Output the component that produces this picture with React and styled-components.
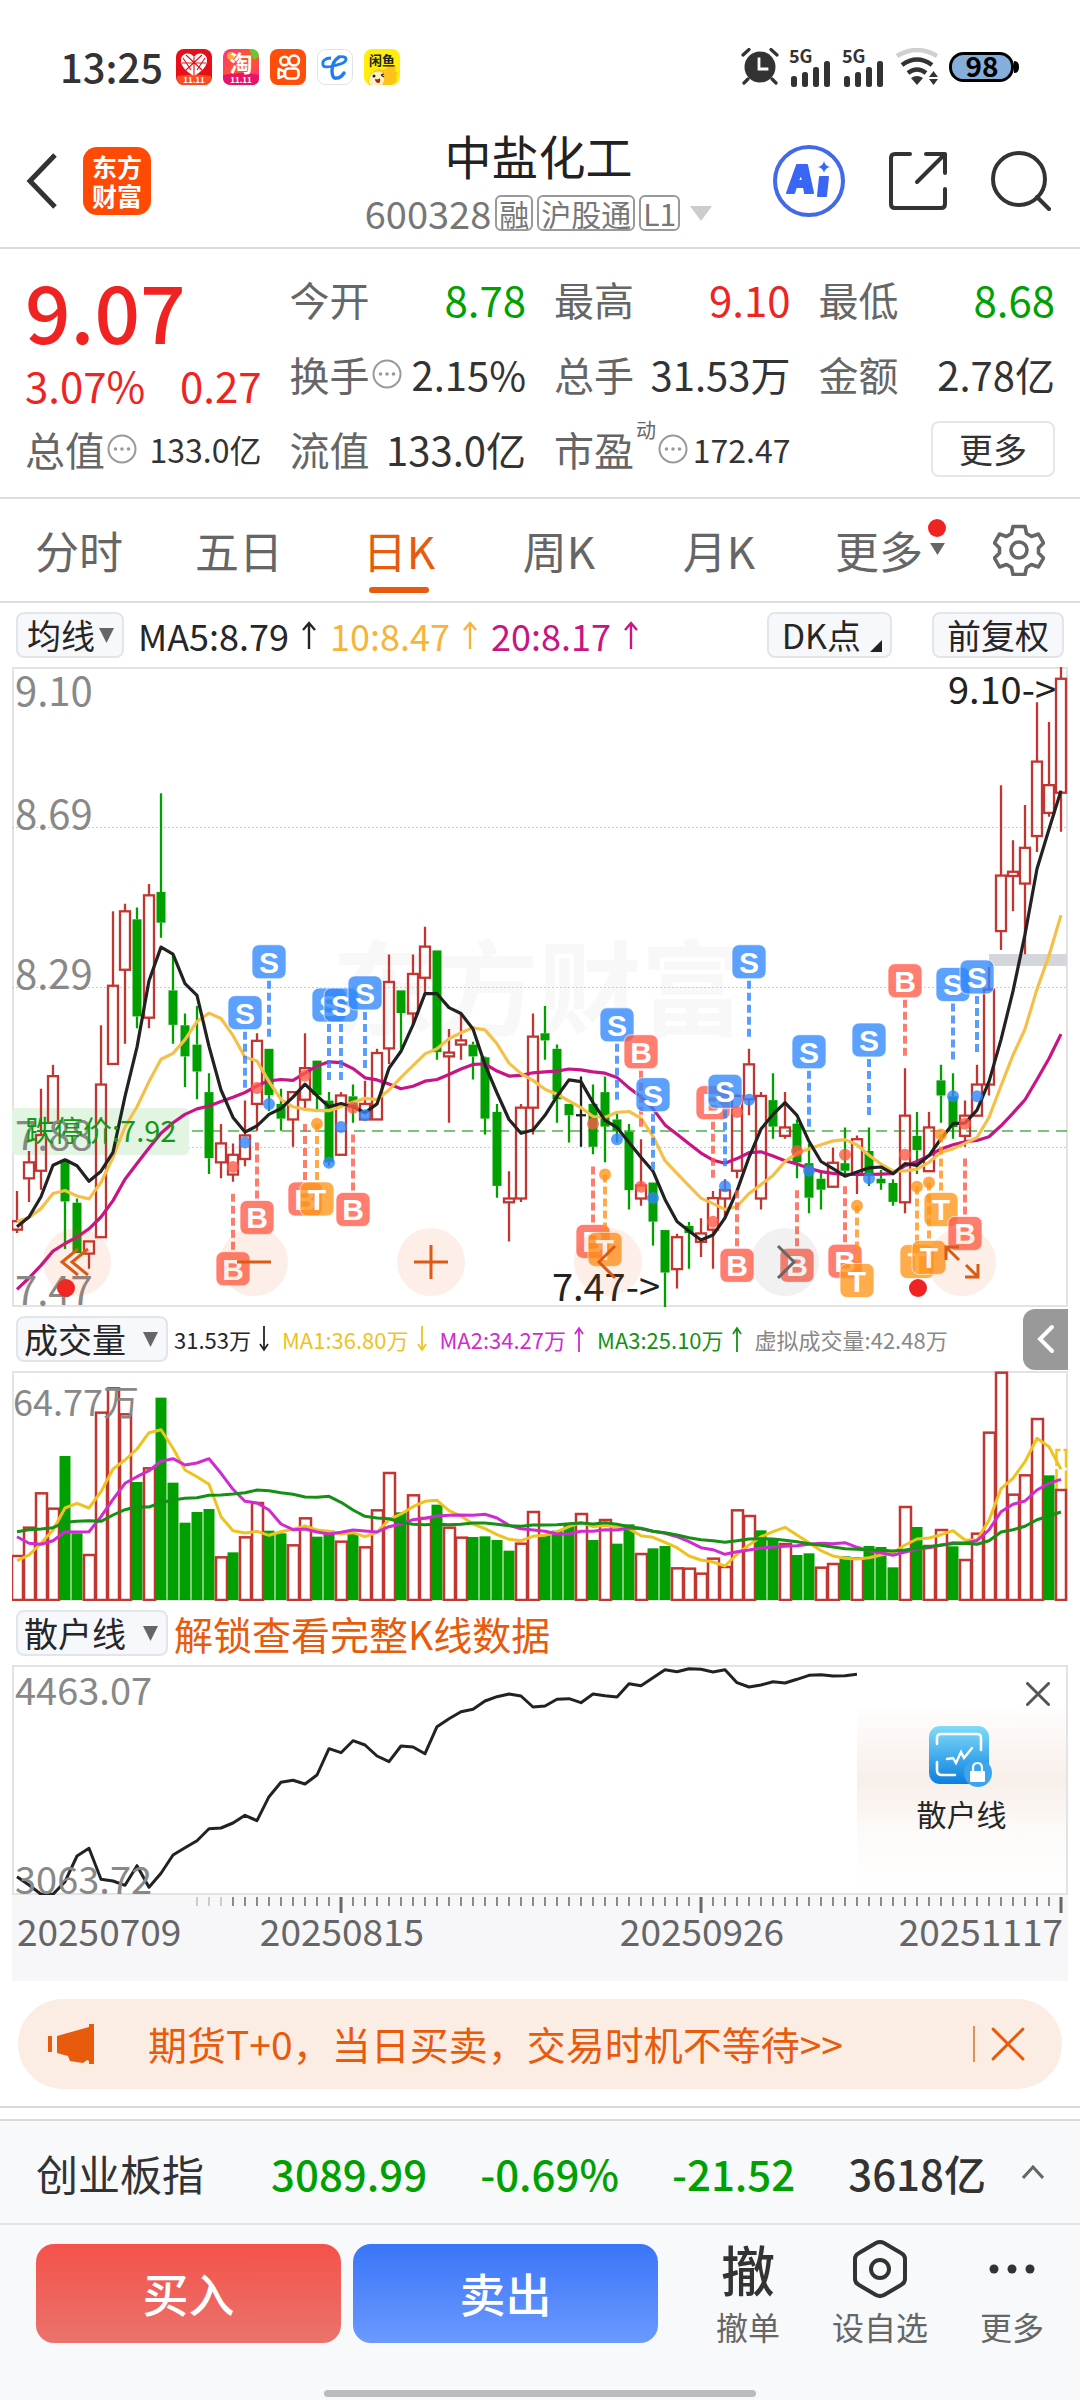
import React from "react";
import styled, { createGlobalStyle } from "styled-components";

const RED = "#f02323";
const CANDLE_RED = "#c23531";
const GREEN = "#00a000";
const ORANGE = "#e85a0c";

const GlobalStyle = createGlobalStyle`
  * { box-sizing: border-box; }
  body {
    margin: 0;
    background: #fff;
    color: #333;
    font-family: "Noto Sans CJK SC", "Noto Sans", sans-serif;
  }
  button, select {
    margin: 0; padding: 0; border: 0; background: none;
    font: inherit; color: inherit; cursor: pointer;
  }
  h1, p { margin: 0; font-weight: 400; }
  svg { display: block; }
  svg text { font-family: "Noto Sans CJK SC", "Noto Sans", sans-serif; }
`;

/* ---------- plot data ---------- */

const STEP = 12;
const px = (i) => 5 + i * STEP;
const priceY = (v) => ((v - 14) * 640) / 1522;
const thirdY = (top) => (v) => (v - top) / 3;

// high, body top, body bottom, low, direction (1 rise, 0 fall, 2 flat)
const CANDLES = [
  [1260, 1332, 1352, 1360, 1], [1165, 1192, 1230, 1286, 1], [1017, 1127, 1212, 1257, 1], [960, 987, 1098, 1098, 1],
  [1186, 1186, 1285, 1398, 0], [1278, 1288, 1408, 1408, 0], [1380, 1380, 1409, 1445, 1], [866, 1007, 1370, 1370, 1],
  [595, 772, 958, 958, 1], [577, 595, 734, 910, 1], [586, 614, 845, 873, 0], [530, 557, 848, 873, 1],
  [314, 549, 622, 658, 0], [700, 783, 865, 910, 0], [838, 866, 940, 1013, 0], [820, 912, 976, 1042, 0],
  [980, 1025, 1182, 1220, 0], [1101, 1147, 1192, 1230, 1], [1147, 1174, 1221, 1238, 1], [1045, 1128, 1184, 1201, 1],
  [885, 903, 1053, 1117, 1], [922, 922, 1032, 1070, 0], [1017, 1053, 1088, 1117, 0], [1025, 1025, 1090, 1155, 1],
  [885, 968, 1043, 1070, 1], [950, 950, 1032, 1072, 0], [1025, 1045, 1192, 1200, 0], [1025, 1033, 1174, 1174, 1],
  [1007, 1035, 1062, 1098, 0], [998, 1053, 1090, 1090, 1], [922, 932, 1090, 1090, 1], [698, 763, 921, 958, 1],
  [783, 783, 837, 922, 0], [698, 744, 838, 866, 1], [632, 679, 753, 790, 1], [688, 688, 930, 948, 0],
  [875, 931, 940, 1098, 1], [838, 902, 912, 948, 1], [905, 912, 940, 995, 0], [940, 942, 1088, 1126, 0],
  [1053, 1072, 1248, 1276, 0], [1213, 1278, 1287, 1380, 1], [1053, 1062, 1278, 1286, 1], [838, 893, 1062, 1126, 1],
  [820, 885, 902, 948, 0], [912, 922, 1042, 1098, 0], [1053, 1053, 1080, 1145, 0], [988, 1080, 1080, 1155, 2],
  [1007, 1053, 1155, 1173, 0], [988, 1025, 1107, 1192, 0], [1072, 1090, 1117, 1145, 0], [1101, 1119, 1258, 1304, 0],
  [1137, 1247, 1278, 1295, 1], [1240, 1240, 1333, 1390, 0], [1353, 1353, 1454, 1538, 0], [1362, 1370, 1446, 1492, 1],
  [1334, 1343, 1360, 1445, 0], [1325, 1361, 1381, 1417, 1], [1260, 1277, 1352, 1445, 1], [1232, 1258, 1278, 1325, 1],
  [1030, 1034, 1212, 1230, 1], [922, 959, 1042, 1080, 1], [1025, 1034, 1278, 1304, 1], [980, 1044, 1107, 1136, 0],
  [1025, 1109, 1129, 1136, 1], [1090, 1100, 1192, 1230, 0], [1147, 1194, 1276, 1313, 0], [1210, 1231, 1257, 1304, 0],
  [1157, 1193, 1250, 1250, 1], [1109, 1194, 1212, 1220, 0], [1128, 1137, 1220, 1267, 1], [1109, 1165, 1220, 1248, 0],
  [1210, 1231, 1242, 1257, 0], [1232, 1241, 1286, 1295, 0], [968, 1081, 1287, 1313, 1], [1072, 1129, 1163, 1220, 0],
  [1072, 1109, 1213, 1213, 1], [960, 997, 1033, 1098, 0], [980, 1035, 1108, 1136, 0], [1045, 1081, 1129, 1155, 1],
  [960, 1007, 1081, 1081, 1], [727, 781, 1007, 1033, 1], [295, 510, 642, 687, 1], [426, 501, 511, 595, 1],
  [342, 444, 529, 697, 1], [98, 239, 416, 454, 1], [145, 295, 361, 370, 1], [14, 42, 313, 406, 1],
];

const MA5 = [1345, 1322, 1274, 1199, 1186, 1200, 1237, 1213, 1168, 1035, 918, 760, 680, 697, 767, 795, 916, 1020, 1085, 1120, 1105, 1078, 1064, 1037, 1006, 1034, 1060, 1052, 1060, 1074, 1053, 968, 928, 865, 791, 791, 824, 838, 875, 960, 1027, 1090, 1123, 1115, 1080, 1035, 996, 1000, 1050, 1092, 1109, 1145, 1180, 1213, 1280, 1333, 1355, 1377, 1365, 1324, 1260, 1180, 1113, 1078, 1050, 1080, 1142, 1190, 1207, 1225, 1215, 1205, 1203, 1219, 1195, 1199, 1176, 1136, 1100, 1099, 1068, 1000, 900, 785, 650, 494, 400, 308];
const MA10 = [1333, 1323, 1302, 1266, 1259, 1272, 1279, 1240, 1180, 1108, 1060, 1000, 947, 933, 900, 857, 837, 850, 890, 942, 951, 1000, 1042, 1060, 1066, 1069, 1069, 1060, 1049, 1040, 1043, 1020, 990, 962, 934, 922, 898, 884, 872, 877, 910, 956, 981, 997, 1018, 1030, 1046, 1062, 1083, 1085, 1073, 1071, 1087, 1130, 1188, 1218, 1248, 1277, 1290, 1304, 1297, 1266, 1245, 1223, 1190, 1170, 1160, 1150, 1141, 1138, 1150, 1175, 1196, 1213, 1212, 1208, 1192, 1168, 1160, 1147, 1133, 1085, 1010, 937, 875, 780, 700, 604];
const MA20 = [1494, 1467, 1437, 1403, 1385, 1370, 1350, 1322, 1283, 1232, 1195, 1158, 1123, 1098, 1078, 1065, 1058, 1047, 1037, 1026, 1010, 998, 995, 997, 980, 963, 953, 955, 969, 991, 996, 1006, 1017, 1011, 999, 995, 983, 970, 959, 958, 975, 987, 985, 979, 977, 975, 970, 972, 977, 980, 990, 1015, 1036, 1065, 1103, 1125, 1148, 1170, 1187, 1194, 1183, 1169, 1167, 1177, 1188, 1196, 1206, 1214, 1218, 1221, 1221, 1221, 1220, 1219, 1200, 1190, 1176, 1160, 1150, 1143, 1140, 1131, 1105, 1075, 1043, 995, 945, 887];

// candle index, kind, badge centre, dot, badge side (1 above, -1 below)
const MARKS = [
  [18, "B", 1445, 1203, -1], [19, "S", 836, 1145, 1], [20, "B", 1323, 1015, -1], [21, "S", 715, 1053, 1],
  [24, "B", 1279, 986, -1], [25, "T", 1279, 1100, -1], [26, "S", 818, 1193, 1], [27, "S", 818, 1108, 1],
  [28, "B", 1304, 1062, -1], [29, "S", 789, 1080, 1], [48, "B", 1380, 1100, -1], [49, "T", 1399, 1221, -1],
  [50, "S", 865, 1137, 1], [52, "B", 929, 1250, 1], [53, "S", 1031, 1277, 1], [58, "B", 1050, 1333, 1],
  [59, "S", 1023, 1249, 1], [60, "B", 1437, 1072, -1], [61, "S", 715, 1043, 1], [65, "B", 1437, 1165, -1],
  [66, "S", 929, 1212, 1], [69, "B", 1427, 1174, -1], [70, "T", 1473, 1295, -1], [71, "S", 901, 1230, 1],
  [74, "B", 760, 1174, 1], [75, "T", 1428, 1250, -1], [76, "T", 1418, 1240, -1], [77, "T", 1304, 1126, -1],
  [78, "S", 769, 1035, 1], [79, "B", 1361, 1100, -1], [80, "S", 751, 1035, 1],
];
const MARK_COLORS = { B: "#ff5a46", S: "#2f86ff", T: "#ff9518" };

const VOLUMES = [765, 680, 577, 623, 468, 700, 762, 335, 262, 340, 546, 502, 293, 548, 668, 636, 627, 769, 757, 709, 606, 692, 700, 733, 652, 710, 692, 722, 700, 739, 628, 516, 637, 583, 651, 614, 680, 710, 711, 709, 720, 752, 728, 633, 706, 692, 670, 639, 720, 657, 731, 673, 759, 745, 738, 802, 803, 818, 773, 798, 628, 645, 691, 716, 729, 765, 760, 800, 789, 769, 772, 738, 741, 802, 618, 681, 735, 687, 739, 777, 698, 395, 215, 581, 523, 354, 526, 567];
const VOLUME_FALLS = new Set([4, 5, 10, 12, 13, 14, 15, 16, 18, 21, 22, 25, 26, 28, 32, 35, 38, 39, 40, 41, 44, 45, 46, 48, 50, 51, 53, 54, 62, 63, 65, 66, 69, 71, 72, 73, 75, 78, 86]);
const VMA1 = [782, 765, 730, 690, 624, 610, 624, 575, 507, 480, 447, 398, 389, 445, 510, 530, 553, 650, 692, 699, 694, 706, 695, 688, 678, 690, 694, 702, 698, 710, 697, 659, 642, 620, 604, 601, 632, 648, 672, 686, 704, 718, 722, 709, 706, 695, 680, 667, 680, 676, 682, 686, 707, 712, 727, 743, 768, 780, 786, 798, 763, 735, 710, 695, 682, 705, 728, 752, 768, 775, 777, 773, 765, 758, 735, 717, 714, 704, 692, 720, 720, 661, 566, 535, 485, 415, 440, 508];
const VMA2 = [710, 730, 733, 722, 695, 696, 695, 650, 598, 550, 530, 512, 484, 476, 495, 489, 476, 520, 568, 604, 609, 630, 672, 689, 687, 696, 702, 697, 690, 693, 696, 680, 672, 659, 655, 648, 646, 645, 646, 643, 654, 676, 686, 690, 694, 702, 702, 694, 694, 689, 690, 684, 686, 694, 700, 710, 725, 743, 749, 763, 755, 750, 744, 741, 739, 737, 733, 730, 731, 728, 742, 752, 758, 766, 756, 747, 743, 736, 728, 729, 722, 690, 635, 613, 603, 570, 550, 538];
const VMA3 = [695, 689, 687, 683, 667, 664, 662, 664, 645, 629, 620, 621, 608, 600, 595, 593, 586, 585, 582, 578, 570, 572, 578, 583, 591, 592, 589, 607, 630, 649, 654, 656, 667, 673, 674, 673, 674, 673, 669, 669, 673, 677, 679, 675, 675, 674, 671, 669, 672, 668, 673, 680, 685, 694, 698, 705, 713, 719, 722, 727, 722, 717, 716, 717, 721, 725, 731, 736, 741, 746, 748, 750, 751, 753, 750, 745, 740, 735, 731, 730, 733, 722, 696, 689, 679, 659, 648, 636];
const RETAIL = [830, 855, 883, 883, 845, 768, 745, 838, 843, 856, 797, 862, 820, 765, 743, 722, 686, 684, 669, 646, 662, 590, 547, 541, 552, 525, 446, 458, 422, 435, 468, 485, 438, 441, 461, 380, 356, 335, 328, 303, 290, 282, 288, 321, 318, 298, 296, 308, 282, 287, 291, 251, 257, 233, 209, 215, 206, 208, 216, 209, 248, 261, 255, 245, 249, 238, 226, 224, 228, 227, 223];

const points = (data, y) => data.map((v, i) => `${px(i)},${y(v).toFixed(1)}`).join(" ");

/* ---------- shared parts ---------- */

const Page = styled.main`
  display: flex;
  flex-direction: column;
  min-height: 100vh;
`;

const IconButton = styled.button`
  display: flex;
  flex: none;
`;

const StatusBar = styled.div`
  display: flex;
  align-items: center;
  justify-content: space-between;
  height: 105px;
  padding: 28px 61px 0 60px;
`;

const StatusGroup = styled.div`
  display: flex;
  align-items: center;
  gap: ${(p) => p.$gap}px;
`;

const Clock = styled.time`
  margin-right: 2px;
  padding-bottom: 2px;
  font-size: 40px;
  line-height: 44px;
  font-weight: 500;
`;

const Header = styled.header`
  display: grid;
  grid-template-columns: 1fr auto 1fr;
  align-items: center;
  height: 144px;
  padding: 0 29px 0 26px;
  border-bottom: 2px solid #dcdcdc;
`;

const HeaderSide = styled.div`
  display: flex;
  align-items: center;
  justify-content: ${(p) => (p.$end ? "flex-end" : "flex-start")};
  gap: ${(p) => (p.$end ? 44 : 25)}px;
  padding-top: 10px;
`;

const AppLogo = styled.button`
  width: 68px;
  height: 68px;
  border-radius: 14px;
  background: #ff4a05;
  color: #fff;
  font-size: 25px;
  line-height: 29px;
  font-weight: 700;
`;

const TitleBlock = styled.div`
  display: flex;
  flex-direction: column;
  align-items: center;
  padding-top: 12px;
`;

const Title = styled.h1`
  font-size: 47px;
  line-height: 62px;
  font-weight: 400;
  color: #222;
`;

const SubTitle = styled.div`
  display: flex;
  align-items: center;
  gap: 4px;
  font-size: 38px;
  line-height: 54px;
  color: #777;
`;

const Tag = styled.span`
  padding: 0 2px;
  border: 2px solid #999;
  border-radius: 6px;
  font-size: 30px;
  line-height: 32px;

  &:last-of-type { margin-right: 6px; }
`;

/* ---------- quote ---------- */

const Quote = styled.section`
  display: grid;
  grid-template-columns: repeat(4, 1fr);
  grid-auto-rows: 75px;
  column-gap: 28px;
  padding: 12px 25px 11px;
  border-bottom: 2px solid #dcdcdc;
`;

const PriceCell = styled.div`
  grid-row: span 2;
  color: ${RED};
`;

const Price = styled.p`
  font-size: 80px;
  line-height: 96px;
  font-weight: 500;
`;

const Change = styled.p`
  display: flex;
  justify-content: space-between;
  font-size: 42px;
  line-height: 56px;
`;

const Cell = styled.div`
  display: flex;
  align-items: center;
  justify-content: space-between;
  white-space: nowrap;
`;

const CellLabel = styled.span`
  display: flex;
  align-items: center;
  gap: 2px;
  font-size: 40px;
  color: #666;
`;

const CellValue = styled.span`
  font-size: ${(p) => (p.$color ? 42 : p.$small ? 32 : 40)}px;
  color: ${(p) => p.$color || "#333"};
`;

const Sup = styled.sup`
  align-self: flex-start;
  font-size: 20px;
  line-height: 20px;
`;

const MoreCell = styled(Cell)`
  justify-content: flex-end;
`;

const MoreButton = styled.button`
  width: 124px;
  height: 56px;
  border: 2px solid #e6e6e6;
  border-radius: 8px;
  font-size: 34px;
  line-height: 50px;
`;

/* ---------- tabs ---------- */

const Tabs = styled.nav`
  display: grid;
  grid-template-columns: repeat(6, 4fr) 3fr;
  height: 104px;
  border-bottom: 2px solid #dcdcdc;
`;

const Tab = styled.button`
  position: relative;
  display: flex;
  align-items: center;
  justify-content: center;
  padding-right: 2px;
  font-size: 44px;
  color: ${(p) => (p.$active ? ORANGE : "#666")};

  &::after {
    content: "";
    position: absolute;
    bottom: 8px;
    width: 60px;
    height: 6px;
    border-radius: 3px;
    background: ${(p) => (p.$active ? ORANGE : "transparent")};
  }
`;

const MoreMark = styled.span`
  position: absolute;
  right: 14px;
  top: 20px;
  display: flex;
  flex-direction: column;
  align-items: center;
  gap: 6px;
`;

const Dot = styled.span`
  width: 18px;
  height: 18px;
  border-radius: 50%;
  background: ${RED};
`;

/* ---------- indicator rows ---------- */

const Row = styled.div`
  display: flex;
  align-items: center;
  justify-content: space-between;
  height: 64px;
  padding: 0 16px;
  white-space: nowrap;
`;

const RowGroup = styled.div`
  display: flex;
  align-items: center;
  gap: ${(p) => p.$gap || 6}px;
`;

const Chip = styled.label`
  display: flex;
  align-items: center;
  justify-content: space-between;
  flex: none;
  width: ${(p) => (p.$wide ? 152 : 108)}px;
  height: 46px;
  padding: 0 8px 0 ${(p) => (p.$wide ? 6 : 9)}px;
  border: 2px solid #e2e5ea;
  border-radius: 8px;
  background: #f7f8fb;
  color: #262626;
`;

const ChipSelect = styled.select`
  appearance: none;
  font-size: 34px;
  line-height: 42px;
`;

const ChipButton = styled.button`
  display: flex;
  align-items: center;
  justify-content: center;
  height: 46px;
  padding: 0 ${(p) => (p.$corner ? 8 : 13)}px 0 13px;
  border: 2px solid #e2e5ea;
  border-radius: 8px;
  background: #f7f8fb;
  color: #262626;
  font-size: 34px;
  line-height: 42px;
`;

const Corner = styled.svg`
  align-self: flex-end;
  margin: 0 0 4px 9px;
`;

const Figure = styled.span`
  display: flex;
  align-items: center;
  gap: ${(p) => (p.$small ? 8 : 13)}px;
  font-size: ${(p) => (p.$small ? 22 : 36)}px;
  color: ${(p) => p.$color};
`;

const Unlock = styled.a`
  font-size: 39px;
  color: ${ORANGE};
  text-decoration: none;
`;

const DrawerButton = styled.button`
  display: flex;
  align-items: center;
  justify-content: center;
  width: 45px;
  height: 61px;
  margin-right: -4px;
  border-radius: 12px 0 0 12px;
  background: #999;
`;

/* ---------- plots ---------- */

const Plot = styled.div`
  position: relative;
  margin: 0 12px;
`;

const PlotSvg = styled.svg`
  width: 100%;
  height: auto;
`;

const BadgeText = styled.text`
  && { font-family: "Liberation Sans", sans-serif; }
  font-size: 30px;
  font-weight: 700;
  fill: #fff;
  text-anchor: middle;
`;

const ControlBar = styled.div`
  position: absolute;
  left: 31px;
  right: 72px;
  bottom: 11px;
  display: flex;
  justify-content: space-between;
`;

const RoundButton = styled.button`
  display: flex;
  align-items: center;
  justify-content: center;
  width: 68px;
  height: 68px;
  border-radius: 50%;
  color: ${(p) => (p.$muted ? "#666" : "#dc5a14")};
  background: ${(p) => (p.$muted ? "rgba(120,120,120,.1)" : "rgba(240,90,20,.1)")};
`;

const LockPanel = styled.aside`
  position: absolute;
  top: 2px;
  right: 0;
  bottom: 2px;
  width: 20%;
  display: flex;
  flex-direction: column;
  align-items: center;
  padding-top: 15px;
  border-right: 2px solid #e3e3e3;
  background: linear-gradient(#fff 15%, #f8efea 50%, #fdfbf9 75%, #fff);
  color: #262626;
  font-size: 30px;
  line-height: 50px;
`;

const CloseLock = styled(IconButton)`
  align-self: flex-end;
  margin: 0 16px 20px 0;
  color: #555;
`;

const Axis = styled.div`
  margin: 0 12px;
  padding-bottom: 20px;
  background: #f7f7fa;
`;

/* ---------- footer ---------- */

const Banner = styled.aside`
  display: flex;
  align-items: center;
  height: 90px;
  margin: 18px 18px 17px;
  padding: 0 37px 0 30px;
  border-radius: 45px;
  background: #fcede4;
  color: ${ORANGE};
`;

const BannerLink = styled.a`
  flex: 1;
  margin-left: 54px;
  padding-bottom: 3px;
  font-size: 39px;
  color: ${ORANGE};
  text-decoration: none;
  white-space: nowrap;
`;

const BannerRule = styled.span`
  width: 2px;
  height: 36px;
  margin-right: 16px;
  background: #e0905f;
`;

const Divider = styled.div`
  height: 13px;
  border-top: 2px solid #d9dadd;
`;

const IndexBar = styled.button`
  display: flex;
  align-items: center;
  justify-content: space-between;
  height: 106px;
  padding: 0 36px;
  border-top: 2px solid #d9dadd;
  border-bottom: 2px solid #e4e5e7;
  background: #f7f9fb;
  font-size: 42px;
  white-space: nowrap;
`;

const IndexName = styled.span`
  margin-right: 14px;
`;

const IndexValue = styled.span`
  display: flex;
  align-items: center;
  gap: 36px;
  font-weight: 500;
  color: ${(p) => (p.$fall ? GREEN : "#333")};
`;

const ActionBar = styled.footer`
  display: flex;
  flex: 1;
  flex-direction: column;
  justify-content: space-between;
  padding: 11px 36px 3px;
  background: #f7f9fb;
`;

const Actions = styled.div`
  display: flex;
  align-items: flex-start;
  gap: 12px;
`;

const TradeButton = styled.button`
  flex: 1;
  height: 99px;
  margin-top: 8px;
  padding-bottom: 4px;
  border-radius: 18px;
  color: #fff;
  font-size: 46px;
  font-weight: 500;
  background: ${(p) => (p.$sell ? "linear-gradient(#3a75f8, #6b99ff)" : "linear-gradient(#f4524a, #ea736c)")};
`;

const Tools = styled.div`
  display: flex;
  gap: 52px;
  margin-left: 46px;
`;

const Tool = styled.button`
  display: flex;
  flex-direction: column;
  align-items: center;
  font-size: 32px;
  line-height: 48px;
  color: #666;
`;

const ToolIcon = styled.span`
  display: flex;
  align-items: center;
  justify-content: center;
  height: 66px;
  color: #333;
  font-size: 54px;
  line-height: 60px;
  font-weight: 500;
`;

const HomeBar = styled.div`
  align-self: center;
  width: 432px;
  height: 7px;
  border-radius: 4px;
  background: #bbbcbe;
`;

/* ---------- icons ---------- */

const Triangle = ({ w = 15, h = 15, color = "#666" }) => (
  <svg width={w} height={h} viewBox="0 0 15 15" preserveAspectRatio="none" aria-hidden="true">
    <path d="M0 0h15L7.5 15z" fill={color} />
  </svg>
);

const Arrow = ({ down, small }) => (
  <svg width={small ? 10 : 14} height={small ? 26 : 28} viewBox={small ? "0 0 10 26" : "0 0 14 28"} fill="none" stroke="currentColor" strokeWidth={small ? 1.8 : 2.4} aria-hidden="true">
    {small
      ? <path d={down ? "M5 0V24M1 18l4 6 4-6" : "M5 26V2M1 8l4-6 4 6"} />
      : <path d="M7 28V2M1 9l6-7 6 7" />}
  </svg>
);

const Info = () => (
  <svg width="30" height="30" viewBox="0 0 30 30" aria-hidden="true">
    <circle cx="15" cy="15" r="13.5" fill="none" stroke="#999" strokeWidth="2" />
    <g fill="#999"><circle cx="8.5" cy="15" r="1.8" /><circle cx="15" cy="15" r="1.8" /><circle cx="21.5" cy="15" r="1.8" /></g>
  </svg>
);

const Cross = ({ size, width = 3 }) => (
  <svg width={size} height={size} viewBox="0 0 32 32" fill="none" stroke="currentColor" strokeWidth={(width * 32) / size} strokeLinecap="round" aria-hidden="true">
    <path d="M2 2l28 28M30 2L2 30" />
  </svg>
);

const AppIcons = () => (
  <>
    <svg width="36" height="36" viewBox="0 0 36 36" aria-hidden="true">
      <rect width="36" height="36" rx="8" fill="#e60f17" />
      <path d="M1 27q17-3 34 0v2q0 7-7 7H8q-7 0-7-7z" fill="#ff4a22" />
      <path d="M18 27C10 22 5 18 5 11c0-7 9-9 13-3 4-6 13-4 13 3 0 7-5 11-13 16z" fill="#fff" />
      <path d="M10 6l16 15M26 6L10 21M18 8v19M6 14h24M7 9l8 12M29 9l-8 12" stroke="#e60f17" strokeWidth="1.1" />
      <text x="18" y="34" fontSize="8" fontWeight="700" fill="#fff" textAnchor="middle">11.11</text>
    </svg>
    <svg width="36" height="36" viewBox="0 0 36 36" aria-hidden="true">
      <defs><linearGradient id="tb" x1="0" y1="0" x2="1" y2="1"><stop stopColor="#ff2f8c" /><stop offset=".5" stopColor="#ff5a1f" /><stop offset="1" stopColor="#ff2a9a" /></linearGradient></defs>
      <rect width="36" height="36" rx="8" fill="url(#tb)" />
      <circle cx="8" cy="7" r="4" fill="#ffb02e" /><path d="M26 0h3q7 1 7 8l-5 3z" fill="#6ac72f" />
      <path d="M0 26q18-4 36 0v3q0 7-7 7H8q-8 0-8-7z" fill="#e4156b" />
      <text x="18" y="23" fontSize="23" fontWeight="700" fill="#fff" textAnchor="middle">淘</text>
      <text x="18" y="34" fontSize="8" fontWeight="700" fill="#fff" textAnchor="middle">11.11</text>
    </svg>
    <svg width="36" height="36" viewBox="0 0 36 36" fill="none" stroke="#fff" strokeWidth="2.6" aria-hidden="true">
      <rect width="36" height="36" rx="8" fill="#ff4d0a" stroke="none" />
      <circle cx="14.5" cy="12" r="4.2" /><circle cx="24" cy="11.5" r="5" />
      <rect x="15" y="19.5" width="13.5" height="10" rx="3.5" />
      <path d="M14.5 22.5l-6-2.5v9l6-2.5z" strokeLinejoin="round" />
    </svg>
    <svg width="36" height="36" viewBox="0 0 36 36" fill="none" stroke="#1e7df0" aria-hidden="true">
      <rect x=".5" y=".5" width="35" height="35" rx="8" fill="#fff" stroke="#e2e2e2" />
      <path d="M14 9c-6 0-9 3-8 7 1 3 6 2 10 1 8-2 13-3 13-7 0-2-4-3-7-2" strokeWidth="2.8" />
      <path d="M22 8c-5 3-7 8-7 14 0 6 2 8 5 7 3 0 5-2 7-5" strokeWidth="3.4" strokeLinecap="round" />
    </svg>
    <svg width="36" height="36" viewBox="0 0 36 36" aria-hidden="true">
      <rect width="36" height="36" rx="8" fill="#ffee0a" />
      <path d="M5 36c-3-10 6-18 15-15 5-5 10-6 12-3l-1 4 3 2-2 4c2 4-2 8-8 8z" fill="#ffc21a" />
      <path d="M5 34c-1-8 5-13 12-11 4 3 4 8 1 13H9q-3 0-4-2z" fill="#fff" opacity=".75" />
      <circle cx="10" cy="27" r="1.5" fill="#222" /><path d="M17 26l3-1M17 26l3 2" stroke="#222" strokeWidth="1.3" /><path d="M11 30q4 1 5-1 1 5-2 5-3-1-3-4z" fill="#b32015" />
      <text x="18" y="16" fontSize="13" fontWeight="700" fill="#222" textAnchor="middle">闲鱼</text>
    </svg>
  </>
);

const Signal = () => (
  <svg width="43" height="40" viewBox="0 -3 43 40" fill="#333" aria-label="5G">
    <text x="0" y="13" fontSize="18" fontWeight="700">5G</text>
    <rect x="2" y="26" width="6" height="11" rx="2.5" /><rect x="13" y="22" width="6" height="15" rx="2.5" />
    <rect x="24" y="17" width="6" height="20" rx="2.5" /><rect x="35" y="11" width="6" height="26" rx="2.5" />
  </svg>
);

const StatusIcons = () => (
  <>
    <svg width="38" height="37" viewBox="0 0 38 37" fill="none" stroke="#333" strokeLinecap="round" aria-hidden="true">
      <circle cx="19" cy="19" r="15.5" fill="#333" stroke="none" />
      <path d="M2 7l6-5.500M36 7l-6-5.500M7 31l-4 4M31 31l4 4" strokeWidth="3.2" />
      <path d="M18 11v10h8" stroke="#fff" strokeWidth="2.8" strokeLinecap="square" />
    </svg>
    <Signal />
    <Signal />
    <svg width="44" height="37" viewBox="0 0 44 37" fill="none" stroke="#333" strokeWidth="4.5" aria-hidden="true">
      <path d="M2 8q20-12 40 0" stroke="#d0d0d0" /><path d="M7 17q15-11 30 0M13 25q9-7 18 0" />
      <path d="M16 30q6-4 12 0l-6 7zM34 29l4.500-6 4.500 6zM34 31l4.500 6 4.500-6z" fill="#333" stroke="none" />
    </svg>
    <svg width="70" height="30" viewBox="0 0 70 30" aria-label="98%">
      <rect x="1.5" y="1.5" width="62" height="27" rx="13" fill="#86aedb" stroke="#000" strokeWidth="3" />
      <path d="M65 9q5 0 5 6t-5 6z" />
      <text x="33" y="25" fontSize="28" fontWeight="700" textAnchor="middle">98</text>
    </svg>
  </>
);

const AiIcon = () => (
  <svg width="72" height="72" viewBox="0 0 72 72" aria-hidden="true">
    <circle cx="36" cy="36" r="34" fill="none" stroke="#4169e8" strokeWidth="4" />
    <path fillRule="evenodd" fill="#3a66f5" stroke="#3a66f5" strokeWidth="2" strokeLinejoin="round" d="M24 20h10l6 28h-8l-1-6h-8l-2 6h-7zM28 28l-3 8h5z" />
    <path d="M47 32h8l-2 19h-8z" fill="#3a66f5" stroke="#3a66f5" strokeWidth="2" strokeLinejoin="round" />
    <path d="M51 16q1 5 6 6-5 1-6 6-1-5-6-6 5-1 6-6z" fill="#3a66f5" />
  </svg>
);

const ShareIcon = () => (
  <svg width="58" height="58" viewBox="0 0 58 58" fill="none" stroke="#333" strokeWidth="4" strokeLinecap="round" strokeLinejoin="round" aria-hidden="true">
    <path d="M21 2H6q-4 0-4 4v46q0 4 4 4h46q4 0 4-4V37M37 2h19v19M55 3L28 30" />
  </svg>
);

const SearchIcon = () => (
  <svg width="60" height="60" viewBox="0 0 60 60" fill="none" stroke="#333" strokeWidth="4" strokeLinecap="round" aria-hidden="true">
    <circle cx="28" cy="28" r="26" /><path d="M46 46l12 12" />
  </svg>
);

const GearIcon = () => (
  <svg width="52" height="52" viewBox="0 0 52 52" fill="none" stroke="#666" strokeWidth="3.6" strokeLinejoin="round" aria-hidden="true">
    <path d="M20 2.500h12l1.500 7 5 3 7-2.500 5 9-5 5v5l5 5-5 9-7-2.500-5 3-1.500 7H20l-1.500-7-5-3-7 2.500-5-9 5-5v-5l-5-5 5-9 7 2.500 5-3z" />
    <circle cx="26" cy="26" r="8" />
  </svg>
);

const Megaphone = () => (
  <svg width="46" height="40" viewBox="0 0 46 40" fill={ORANGE} aria-hidden="true">
    <path d="M0 12h4v16H0zM9 12L41 3V0h5v40h-5v-3l-2-1-4 3-13-2-2-5-11-3z" />
  </svg>
);

const HexIcon = () => (
  <svg width="54" height="58" viewBox="0 0 54 58" fill="none" stroke="#333" strokeWidth="4" strokeLinejoin="round" aria-hidden="true">
    <path d="M23 3q4-2 8 0l17 10q4 2 4 6v20q0 4-4 6L31 55q-4 2-8 0L6 45q-4-2-4-6V19q0-4 4-6z" />
    <circle cx="27" cy="29" r="9" />
  </svg>
);

const LockChart = () => (
  <svg width="64" height="62" viewBox="0 0 64 62" fill="none" stroke="#fff" strokeLinecap="round" aria-hidden="true">
    <defs><linearGradient id="lk" x2="0" y2="1"><stop stopColor="#7fdcf9" /><stop offset="1" stopColor="#0b7fe0" /></linearGradient></defs>
    <rect width="60" height="58" rx="11" fill="url(#lk)" stroke="none" />
    <path d="M8 18v-6q0-4 4-4h36q4 0 4 4v12M8 36v8q0 5 5 5h13" strokeWidth="2.6" />
    <path d="M18 33l6-1 3 5 5-11 3 6 8-10" strokeWidth="2.4" />
    <circle cx="49" cy="47" r="14" fill="#3da5ef" stroke="none" />
    <rect x="41" y="45" width="15" height="11" rx="1" fill="#fff" stroke="none" />
    <path d="M44 45v-3q0-5 4.500-5t4.500 5v3" strokeWidth="2.2" />
  </svg>
);

/* ---------- plots ---------- */

const Frame = ({ height }) => (
  <rect x="1" y="1" width="1054" height={height - 2} fill="none" stroke="#e3e3e3" strokeWidth="2" />
);

const Candle = ({ data: [hi, top, bottom, lo, dir], i }) => {
  const x = px(i);
  const color = dir === 1 ? CANDLE_RED : dir === 0 ? GREEN : "#222";
  const h = priceY(bottom) - priceY(top);
  return (
    <g stroke={color} strokeWidth="2.3" fill="none">
      <path d={`M${x} ${priceY(hi)}V${priceY(top)}M${x} ${priceY(bottom)}V${priceY(lo)}`} />
      {dir === 1 && <rect x={x - 5} y={priceY(top)} width="10" height={h} />}
      {dir === 0 && <rect x={x - 4.5} y={priceY(top)} width="9" height={h} fill={color} stroke="none" />}
      {dir === 2 && <path d={`M${x - 5} ${priceY(top)}h10`} />}
    </g>
  );
};

const Mark = ({ data: [i, kind, centre, dot, side] }) => {
  const x = px(i);
  const y = priceY(centre);
  const color = MARK_COLORS[kind];
  return (
    <g>
      <path d={`M${x} ${y + side * 19}v${side * 56}`} stroke={color} strokeOpacity=".8" strokeWidth="4" strokeDasharray="8 4" />
      <circle cx={x} cy={priceY(dot)} r="6" fill={color} fillOpacity=".8" />
      <rect x={x - 17} y={y - 17} width="34" height="34" rx="7" fill={color} fillOpacity=".78" stroke="#fff" strokeOpacity=".7" />
      <BadgeText x={x} y={y + 11}>{kind}</BadgeText>
    </g>
  );
};

const PriceSvg = () => (
  <PlotSvg viewBox="0 0 1056 640" role="img" aria-label="日K">
    <text x="526" y="361" fontSize="103" fontWeight="700" fill="#f8f8f8" textAnchor="middle">东方财富</text>
    <Frame height={640} />
    <path d="M0 160.500H1056M0 320.500H1056M0 480.500H1056" stroke="#ccc" strokeDasharray="2 2" />
    <path d="M0 464H1056" stroke="#4cb34c" strokeWidth="1.5" strokeDasharray="11 7" />
    <rect x="0" y="441" width="177" height="47" rx="5" fill="#e2f4e2" />
    <rect x="977" y="287" width="78" height="12" fill="#d3d7dc" />
    {CANDLES.map((c, i) => <Candle key={i} data={c} i={i} />)}
    <g fill="none" strokeWidth="3.2" strokeLinejoin="round">
      <polyline points={points(MA20, priceY)} stroke="#c71585" />
      <polyline points={points(MA10, priceY)} stroke="#f5c04a" />
      <polyline points={points(MA5, priceY)} stroke="#222" />
    </g>
    {MARKS.map((m) => <Mark key={m[0]} data={m} />)}
    <g fontSize="40" fill="#888">
      <text x="3" y="39">9.10</text>
      <text x="3" y="162">8.69</text>
      <text x="3" y="322">8.29</text>
      <text x="3" y="483">7.88</text>
      <text x="3" y="638">7.47</text>
    </g>
    <text x="13" y="475" fontSize="29" fill="#129a12">跌停价:7.92</text>
    <g fontSize="38" fill="#222" textAnchor="end">
      <text x="1044" y="37">9.10-&gt;</text>
      <text x="648" y="634">7.47-&gt;</text>
    </g>
    <circle cx="54" cy="621" r="9" fill={RED} />
    <circle cx="906" cy="621" r="9" fill={RED} />
  </PlotSvg>
);

const volY = thirdY(213);

const VolumeSvg = () => (
  <PlotSvg viewBox="0 0 1056 230" role="img" aria-label="成交量">
    <Frame height={230} />
    <path d={`M1044.500 ${volY(567)}V${volY(450)}H1054V${volY(567)}`} fill="none" stroke="#f0c419" strokeWidth="2.5" strokeDasharray="20 3" />
    {VOLUMES.map((v, i) =>
      VOLUME_FALLS.has(i)
        ? <rect key={i} x={px(i) - 5.5} y={volY(v)} width="11" height={229 - volY(v)} fill={GREEN} />
        : <rect key={i} x={px(i) - 5} y={volY(v) + 1} width={i === 87 ? 10 : 11} height={228 - volY(v)} fill="#fff" stroke={CANDLE_RED} strokeWidth="2.5" />
    )}
    <g fill="none" strokeWidth="3" strokeLinejoin="round">
      <polyline points={points(VMA1, volY)} stroke="#eec31e" />
      <polyline points={points(VMA2, volY)} stroke="#d02bd0" />
      <polyline points={points(VMA3, volY)} stroke="#159015" />
    </g>
    <text x="1" y="45" fontSize="36" fill="#888">64.77万</text>
  </PlotSvg>
);

const RetailSvg = () => (
  <PlotSvg viewBox="0 0 1056 230" role="img" aria-label="散户线">
    <Frame height={230} />
    <polyline points={points(RETAIL, thirdY(195))} fill="none" stroke="#222" strokeWidth="3" strokeLinejoin="round" />
    <g fontSize="38" fill="#888">
      <text x="3" y="40">4463.07</text>
      <text x="3" y="229">3063.72</text>
    </g>
  </PlotSvg>
);

const MAJOR = new Set([27, 57, 87]);

const AxisSvg = () => (
  <PlotSvg viewBox="0 0 1056 66" role="img" aria-label="日期">
    <g stroke="#666">
      {Array.from({ length: 73 }, (_, k) => k + 15).map((i) => (
        <path key={i} d={`M${px(i)} 2v${MAJOR.has(i) ? 16 : 9}`} strokeWidth={MAJOR.has(i) ? 3 : 1.5} opacity={i < 18 ? 0.4 : 1} />
      ))}
    </g>
    <g fontSize="37" fill="#666">
      <text x="5" y="51">20250709</text>
      <text x="330" y="51" textAnchor="middle">20250815</text>
      <text x="690" y="51" textAnchor="middle">20250926</text>
      <text x="1051" y="51" textAnchor="end">20251117</text>
    </g>
  </PlotSvg>
);

const CONTROLS = [
  { label: "最早", d: "M25 11L9 24l16 13M35 11L19 24l16 13" },
  { label: "缩小", d: "M7 24h34" },
  { label: "放大", d: "M7 24h34M24 7v34" },
  { label: "向前", d: "M31 8L15 24l16 16" },
  { label: "向后", muted: true, d: "M17 8l16 16-16 16" },
  { label: "全屏", d: "M8 22V9h13M8 9l13 13M27 39h13V26M40 39L28 27" },
];

const Select = ({ value, wide }) => (
  <Chip $wide={wide}>
    <ChipSelect aria-label={value} defaultValue={value}>
      <option>{value}</option>
    </ChipSelect>
    <Triangle />
  </Chip>
);

const Stat = ({ label, value, color, info, sup, small }) => (
  <Cell>
    <CellLabel>{label}{sup && <Sup>{sup}</Sup>}{info && <Info />}</CellLabel>
    <CellValue $color={color} $small={small}>{value}</CellValue>
  </Cell>
);

const TABS = ["分时", "五日", "日K", "周K", "月K"];

export default function App() {
  return (
    <Page>
      <GlobalStyle />
      <StatusBar>
        <StatusGroup $gap={11}>
          <Clock>13:25</Clock>
          <AppIcons />
        </StatusGroup>
        <StatusGroup $gap={10}><StatusIcons /></StatusGroup>
      </StatusBar>

      <Header>
        <HeaderSide>
          <IconButton aria-label="返回">
            <svg width="32" height="56" viewBox="0 0 32 56" fill="none" stroke="#333" strokeWidth="5"><path d="M29 2L4 28l25 26" /></svg>
          </IconButton>
          <AppLogo>东方<br />财富</AppLogo>
        </HeaderSide>
        <TitleBlock>
          <Title>中盐化工</Title>
          <SubTitle>600328<Tag>融</Tag><Tag>沪股通</Tag><Tag>L1</Tag><Triangle w={22} color="#ccc" /></SubTitle>
        </TitleBlock>
        <HeaderSide $end>
          <IconButton aria-label="Ai"><AiIcon /></IconButton>
          <IconButton aria-label="分享"><ShareIcon /></IconButton>
          <IconButton aria-label="搜索"><SearchIcon /></IconButton>
        </HeaderSide>
      </Header>

      <Quote>
        <PriceCell>
          <Price>9.07</Price>
          <Change><span>3.07%</span><span>0.27</span></Change>
        </PriceCell>
        <Stat label="今开" value="8.78" color={GREEN} />
        <Stat label="最高" value="9.10" color={RED} />
        <Stat label="最低" value="8.68" color={GREEN} />
        <Stat label="换手" value="2.15%" info />
        <Stat label="总手" value="31.53万" />
        <Stat label="金额" value="2.78亿" />
        <Stat label="总值" value="133.0亿" info small />
        <Stat label="流值" value="133.0亿" />
        <Stat label="市盈" value="172.47" sup="动" info small />
        <MoreCell><MoreButton>更多</MoreButton></MoreCell>
      </Quote>

      <Tabs>
        {TABS.map((t) => <Tab key={t} $active={t === "日K"}>{t}</Tab>)}
        <Tab>更多<MoreMark><Dot /><Triangle w={15} h={12} /></MoreMark></Tab>
        <Tab aria-label="设置"><GearIcon /></Tab>
      </Tabs>

      <Row>
        <RowGroup $gap={14}>
          <Select value="均线" />
          <Figure $color="#262626">MA5:8.79<Arrow /></Figure>
          <Figure $color="#f5b53a">10:8.47<Arrow /></Figure>
          <Figure $color="#c71585">20:8.17<Arrow /></Figure>
        </RowGroup>
        <RowGroup $gap={40}>
          <ChipButton $corner>DK点<Corner width="12" height="12" viewBox="0 0 12 12"><path d="M12 0v12H0z" fill="#222" /></Corner></ChipButton>
          <ChipButton>前复权</ChipButton>
        </RowGroup>
      </Row>

      <Plot>
        <PriceSvg />
        <ControlBar>
          {CONTROLS.map((c) => (
            <RoundButton key={c.label} aria-label={c.label} $muted={c.muted}>
              <svg width="48" height="48" viewBox="0 0 48 48" fill="none" stroke="currentColor" strokeWidth="3"><path d={c.d} /></svg>
            </RoundButton>
          ))}
        </ControlBar>
      </Plot>

      <Row>
        <RowGroup>
          <Select value="成交量" wide />
          <RowGroup $gap={13}>
            <Figure $small $color="#262626">31.53万<Arrow down small /></Figure>
            <Figure $small $color="#eec31e">MA1:36.80万<Arrow down small /></Figure>
            <Figure $small $color="#d02bd0">MA2:34.27万<Arrow small /></Figure>
            <Figure $small $color="#159015">MA3:25.10万<Arrow small /></Figure>
            <Figure $small $color="#888">虚拟成交量:42.48万</Figure>
          </RowGroup>
        </RowGroup>
        <DrawerButton aria-label="展开">
          <svg width="18" height="30" viewBox="0 0 18 30" fill="none" stroke="#fff" strokeWidth="4" strokeLinecap="round"><path d="M15 3L3 15l12 12" /></svg>
        </DrawerButton>
      </Row>

      <Plot><VolumeSvg /></Plot>

      <Row>
        <RowGroup>
          <Select value="散户线" wide />
          <Unlock href="#unlock">解锁查看完整K线数据</Unlock>
        </RowGroup>
      </Row>

      <Plot>
        <RetailSvg />
        <LockPanel>
          <CloseLock aria-label="关闭"><Cross size={24} /></CloseLock>
          <LockChart />
          散户线
        </LockPanel>
      </Plot>
      <Axis><AxisSvg /></Axis>

      <Banner>
        <Megaphone />
        <BannerLink href="#futures">期货T+0，当日买卖，交易时机不等待&gt;&gt;</BannerLink>
        <BannerRule />
        <IconButton aria-label="关闭"><Cross size={34} /></IconButton>
      </Banner>

      <Divider />
      <IndexBar>
        <IndexName>创业板指</IndexName>
        <IndexValue $fall>3089.99</IndexValue>
        <IndexValue $fall>-0.69%</IndexValue>
        <IndexValue $fall>-21.52</IndexValue>
        <IndexValue>
          3618亿
          <svg width="22" height="14" viewBox="0 0 22 14" fill="none" stroke="#666" strokeWidth="3"><path d="M1 13L11 2l10 11" /></svg>
        </IndexValue>
      </IndexBar>

      <ActionBar>
        <Actions>
          <TradeButton>买入</TradeButton>
          <TradeButton $sell>卖出</TradeButton>
          <Tools>
            <Tool><ToolIcon>撤</ToolIcon>撤单</Tool>
            <Tool><ToolIcon><HexIcon /></ToolIcon>设自选</Tool>
            <Tool>
              <ToolIcon>
                <svg width="46" height="10" viewBox="0 0 46 10" fill="#333"><circle cx="5" cy="5" r="4.5" /><circle cx="23" cy="5" r="4.5" /><circle cx="41" cy="5" r="4.5" /></svg>
              </ToolIcon>
              更多
            </Tool>
          </Tools>
        </Actions>
        <HomeBar />
      </ActionBar>
    </Page>
  );
}
